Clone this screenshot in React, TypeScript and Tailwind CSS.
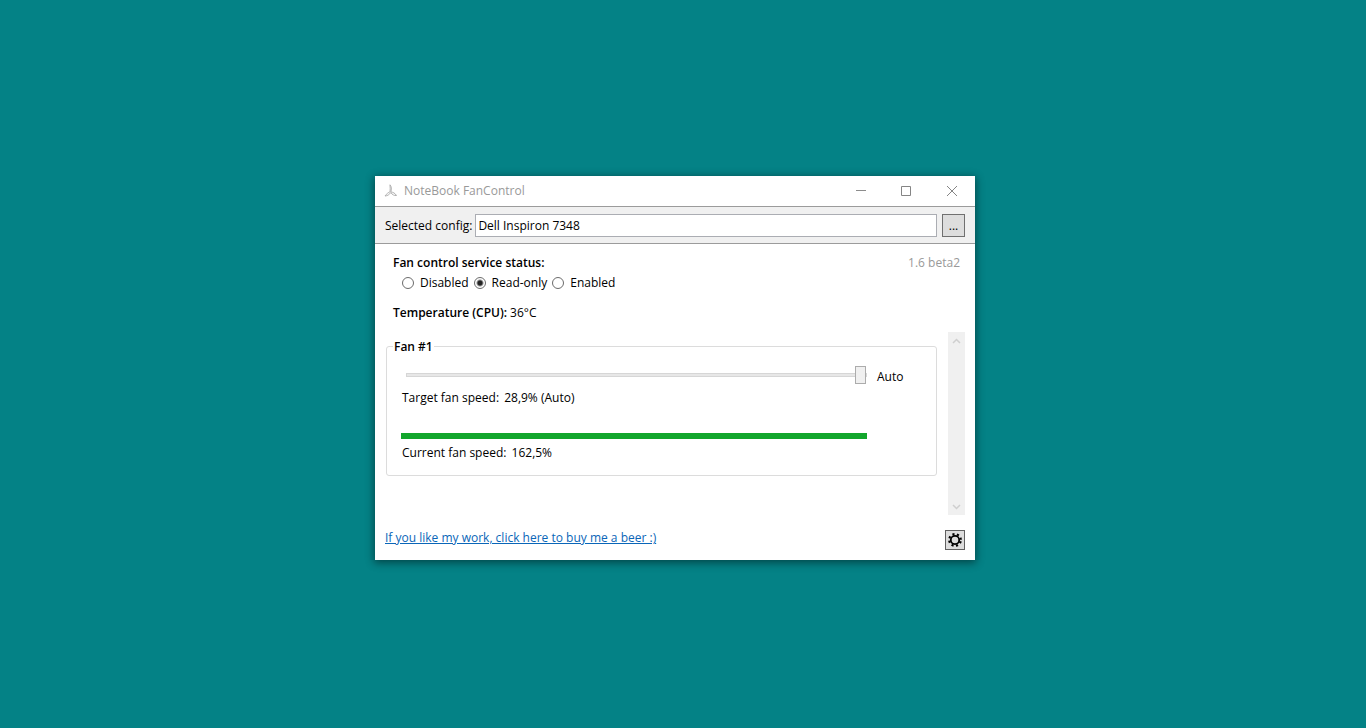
import { useState } from "react";

const statuses = ["Disabled", "Read-only", "Enabled"];

const radioClass =
  "h-3 w-3 shrink-0 appearance-none rounded-full border border-[#6b6b6b] bg-white checked:bg-[radial-gradient(circle,#222_2px,transparent_4px)]";

const sliderClass =
  "block h-[18px] w-full appearance-none bg-transparent [&::-webkit-slider-runnable-track]:h-1 [&::-webkit-slider-runnable-track]:border [&::-webkit-slider-runnable-track]:border-[#d6d6d6] [&::-webkit-slider-runnable-track]:bg-[#e7e7e7] [&::-webkit-slider-thumb]:-mt-2 [&::-webkit-slider-thumb]:h-[18px] [&::-webkit-slider-thumb]:w-[11px] [&::-webkit-slider-thumb]:appearance-none [&::-webkit-slider-thumb]:border [&::-webkit-slider-thumb]:border-[#acacac] [&::-webkit-slider-thumb]:bg-[#f0f0f0]";

function TitleBar() {
  return (
    <header className="flex h-[30px] items-center bg-white pl-[9px] text-[#999]">
      <svg width="14" height="14" viewBox="0 0 14 14" fill="none" stroke="#b0b0b0" aria-hidden="true">
        <path d="M6 .8c1.500 1.600 1.700 4.400.8 7.200M6 .8c.3 2.400.2 4.800.1 6.700" />
        <path d="M6.300 7.500C4.500 8.500 2.500 9.800 1 12c2.300-.2 4.400-1.300 5.800-3.500" />
        <path d="M7 8c2 .1 4 1.200 5.500 3.500-2.300.3-4.300-.8-5.700-3" />
      </svg>
      <h1 className="ml-[6px] text-[12px] leading-4">NoteBook FanControl</h1>
      <div className="ml-auto flex h-full">
        <button type="button" aria-label="Minimize" className="flex w-[45px] items-center justify-center">
          <svg width="10" height="10" viewBox="0 0 10 10" stroke="#8c8c8c" fill="none">
            <path d="M0 4.500h10" />
          </svg>
        </button>
        <button type="button" aria-label="Maximize" className="flex w-[46px] items-center justify-center">
          <svg width="10" height="10" viewBox="0 0 10 10" stroke="#858585" fill="none">
            <path d="M.5.5h9v9h-9z" />
          </svg>
        </button>
        <button type="button" aria-label="Close" className="flex w-[46px] items-center justify-center">
          <svg width="10" height="10" viewBox="0 0 10 10" stroke="#858585" fill="none">
            <path d="M0 0l10 10M10 0L0 10" />
          </svg>
        </button>
      </div>
    </header>
  );
}

function ScrollBar() {
  return (
    <div className="flex w-[17px] shrink-0 flex-col items-center justify-between bg-[#f0f0f0] pt-[6px] pb-[5px]">
      <svg width="9" height="6" viewBox="0 0 9 6" fill="none" stroke="#cfcfcf" strokeWidth="1.500" aria-hidden="true">
        <path d="M1 5l3.500-3.500L8 5" />
      </svg>
      <svg width="9" height="6" viewBox="0 0 9 6" fill="none" stroke="#cfcfcf" strokeWidth="1.500" aria-hidden="true">
        <path d="M1 1l3.500 3.500L8 1" />
      </svg>
    </div>
  );
}

function FanPanel() {
  const [speed, setSpeed] = useState(100);
  return (
    <fieldset className="mt-[5px] min-w-0 flex-1 self-start rounded-[3px] border border-[#dcdcdc] pb-[14px] pl-[14px]">
      <legend className="-ml-2 px-px pt-[2px] font-semibold">Fan #1</legend>
      <div className="grid grid-cols-[1fr_59px] gap-x-[10px] pt-[11px]">
        <div className="pl-[5px]">
          <input
            id="fan-speed"
            type="range"
            min={0}
            max={100}
            value={speed}
            onChange={(e) => setSpeed(Number(e.target.value))}
            className={sliderClass}
          />
        </div>
        <label htmlFor="fan-speed" className="pt-[3px]">
          Auto
        </label>
        <p className="mt-[5px] pl-px">
          Target fan speed: <span className="ml-[2px]">28,9% (Auto)</span>
        </p>
      </div>
      <div className="mt-[27px] mr-[69px]">
        <div
          role="progressbar"
          aria-label="Current fan speed"
          aria-valuenow={100}
          className="h-[6px] bg-[#12a62c]"
        />
        <p className="mt-[6px] pl-px">
          Current fan speed: <span className="ml-[2px]">162,5%</span>
        </p>
      </div>
    </fieldset>
  );
}

export default function App() {
  const [status, setStatus] = useState("Read-only");
  return (
    <div className="flex min-h-screen items-center justify-center bg-[#048286] pt-2 pr-4 font-['Open_Sans','Noto_Sans',sans-serif] text-[12px] leading-4 text-black">
      <main className="w-full max-w-[600px] bg-white shadow-[0_2px_8px_1px_rgba(0,0,0,0.45)]">
        <TitleBar />
        <div className="flex items-center border-y border-[#9b9b9b] bg-[#f0f0f0] px-[10px] pt-[7px] pb-[6px]">
          <label htmlFor="config">Selected config:</label>
          <input
            id="config"
            readOnly
            value="Dell Inspiron 7348"
            className="ml-[3px] h-[23px] min-w-0 flex-1 border border-[#abadb3] bg-white px-[2px]"
          />
          <button
            type="button"
            aria-label="Select config"
            className="ml-[5px] h-[23px] w-[23px] border border-[#707070] bg-[#ddd] leading-4"
          >
            ...
          </button>
        </div>

        <section className="flex justify-between pt-[11px] pr-[15px] pl-[18px]">
          <div>
            <h2 className="font-semibold" id="status-title">
              Fan control service status:
            </h2>
            <div role="radiogroup" aria-labelledby="status-title" className="mt-1 flex gap-[5px] pl-[9px]">
              {statuses.map((name) => (
                <label key={name} className="flex items-center gap-[6px]">
                  <input
                    type="radio"
                    name="status"
                    checked={status === name}
                    onChange={() => setStatus(name)}
                    className={radioClass}
                  />
                  {name}
                </label>
              ))}
            </div>
            <p className="mt-[14px]">
              <span className="font-semibold">Temperature (CPU):</span>
              <span className="ml-[3px]">36°C</span>
            </p>
          </div>
          <p className="text-[#999]">1.6 beta2</p>
        </section>

        <section className="mt-[11px] flex min-h-[183px] gap-[11px] pr-[10px] pl-[11px]">
          <FanPanel />
          <ScrollBar />
        </section>

        <footer className="flex items-start justify-between px-[10px] pt-[15px] pb-[10px]">
          <a href="#donate" className="text-[#0a66b8] underline">
            If you like my work, click here to buy me a beer :)
          </a>
          <button
            type="button"
            aria-label="Settings"
            className="flex h-5 w-5 items-center justify-center border border-[#606060] bg-[#ddd]"
          >
            <svg width="14" height="14" viewBox="0 0 14 14" fill="none" stroke="#000" aria-hidden="true">
              <circle cx="7" cy="7" r="4.200" strokeWidth="1.800" />
              <circle cx="7" cy="7" r="5.800" strokeWidth="2.200" strokeDasharray="2.100 2.455" strokeDashoffset="3.320" />
            </svg>
          </button>
        </footer>
      </main>
    </div>
  );
}
